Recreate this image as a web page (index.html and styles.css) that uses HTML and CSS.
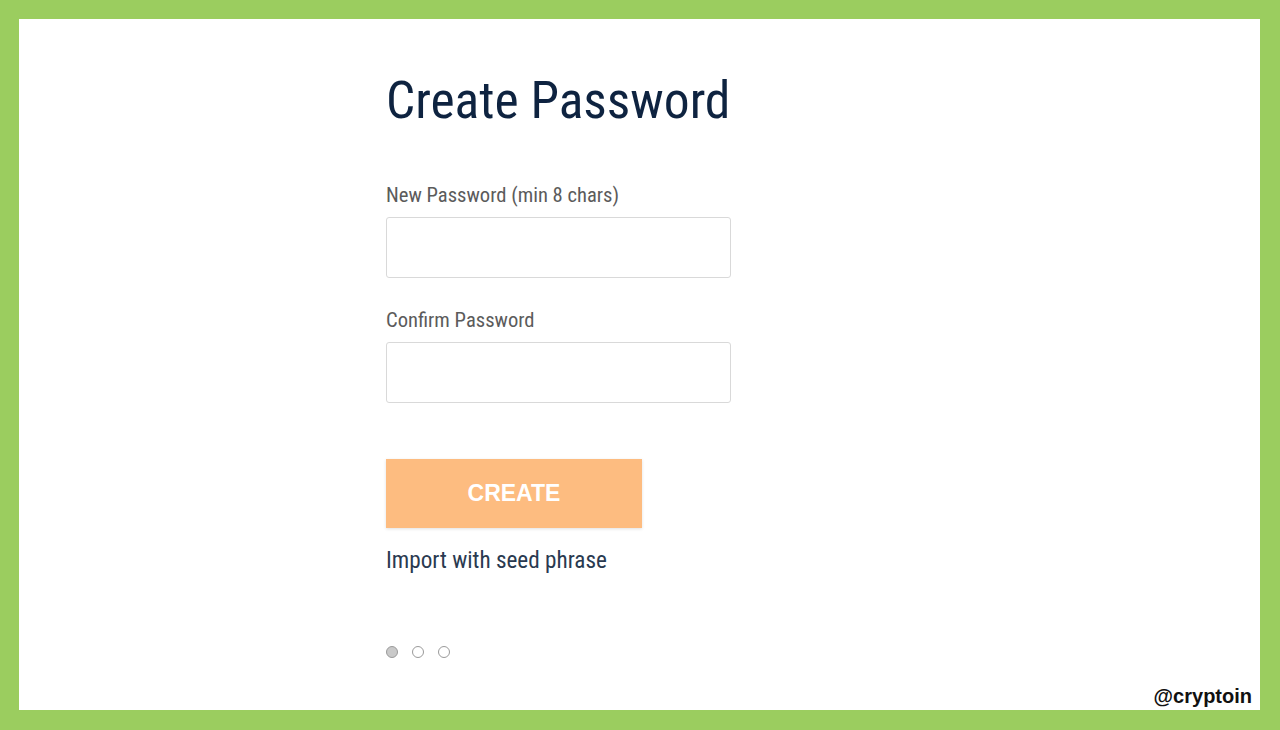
FILE: index.html
```html
<!DOCTYPE html>
<html lang="en">
<head>
    <meta charset="UTF-8">
    <meta name="viewport" content="width=device-width, initial-scale=1.0">
    <title>Create Password</title>
    <link rel="stylesheet" href="styles.css">
</head>
<body>
    <div class="frame">
        <div class="form">
            <h1>Create Password</h1>
            <label class="field-label" for="newPassword">New Password (min 8 chars)</label>
            <input class="field" id="newPassword" type="password">
            <label class="field-label" for="confirmPassword">Confirm Password</label>
            <input class="field" id="confirmPassword" type="password">
            <button class="create-btn">CREATE</button>
            <a class="import-link" href="#">Import with seed phrase</a>
            <div class="dots">
                <span class="dot active"></span>
                <span class="dot"></span>
                <span class="dot"></span>
            </div>
        </div>
        <div class="watermark">@cryptoin</div>
    </div>
</body>
</html>
```

FILE: styles.css
```css
html, body {
    margin: 0;
    height: 100%;
}
body {
    background-color: #9bcd5f;
    padding: 19px 20px 20px 19px;
    box-sizing: border-box;
    font-family: "Roboto Condensed", "Liberation Sans Narrow", Roboto, sans-serif;
    font-stretch: condensed;
}
.frame {
    position: relative;
    height: 100%;
    background-color: #fff;
}
.form {
    width: 345px;
    margin-left: 367px;
    padding-top: 52px;
    display: flex;
    flex-direction: column;
    align-items: flex-start;
}
h1 {
    margin: 0 0 52px;
    font-size: 51.5px;
    font-weight: 400;
    color: #0e2340;
    line-height: 60px;
    white-space: nowrap;
}
.field-label {
    font-size: 20.6px;
    color: #5b5b5b;
    line-height: 24px;
    margin-bottom: 10px;
}
.field {
    width: 100%;
    height: 61px;
    box-sizing: border-box;
    border: 1px solid #d9d9d9;
    border-radius: 3px;
    margin-bottom: 30px;
}
.create-btn {
    margin-top: 26px;
    width: 256px;
    height: 69px;
    border: none;
    background-color: #fdbc80;
    color: #fff;
    font-family: "Liberation Sans", Arial, sans-serif;
    font-stretch: normal;
    font-weight: 700;
    font-size: 23px;
    box-shadow: 0 1px 3px rgba(0, 0, 0, 0.12);
}
.import-link {
    margin-top: 18px;
    font-size: 23.2px;
    color: #2a3a50;
    text-decoration: none;
    line-height: 28px;
}
.dots {
    display: flex;
    gap: 14px;
    margin-top: 72px;
}
.dot {
    width: 12px;
    height: 12px;
    box-sizing: border-box;
    border: 1px solid #9a9a9a;
    border-radius: 50%;
}
.dot.active {
    background-color: #c9c9c9;
}
.watermark {
    position: absolute;
    right: 8px;
    bottom: 2px;
    font-family: "Liberation Sans", Arial, sans-serif;
    font-stretch: normal;
    font-weight: 700;
    font-size: 20px;
    color: #111;
}
```
